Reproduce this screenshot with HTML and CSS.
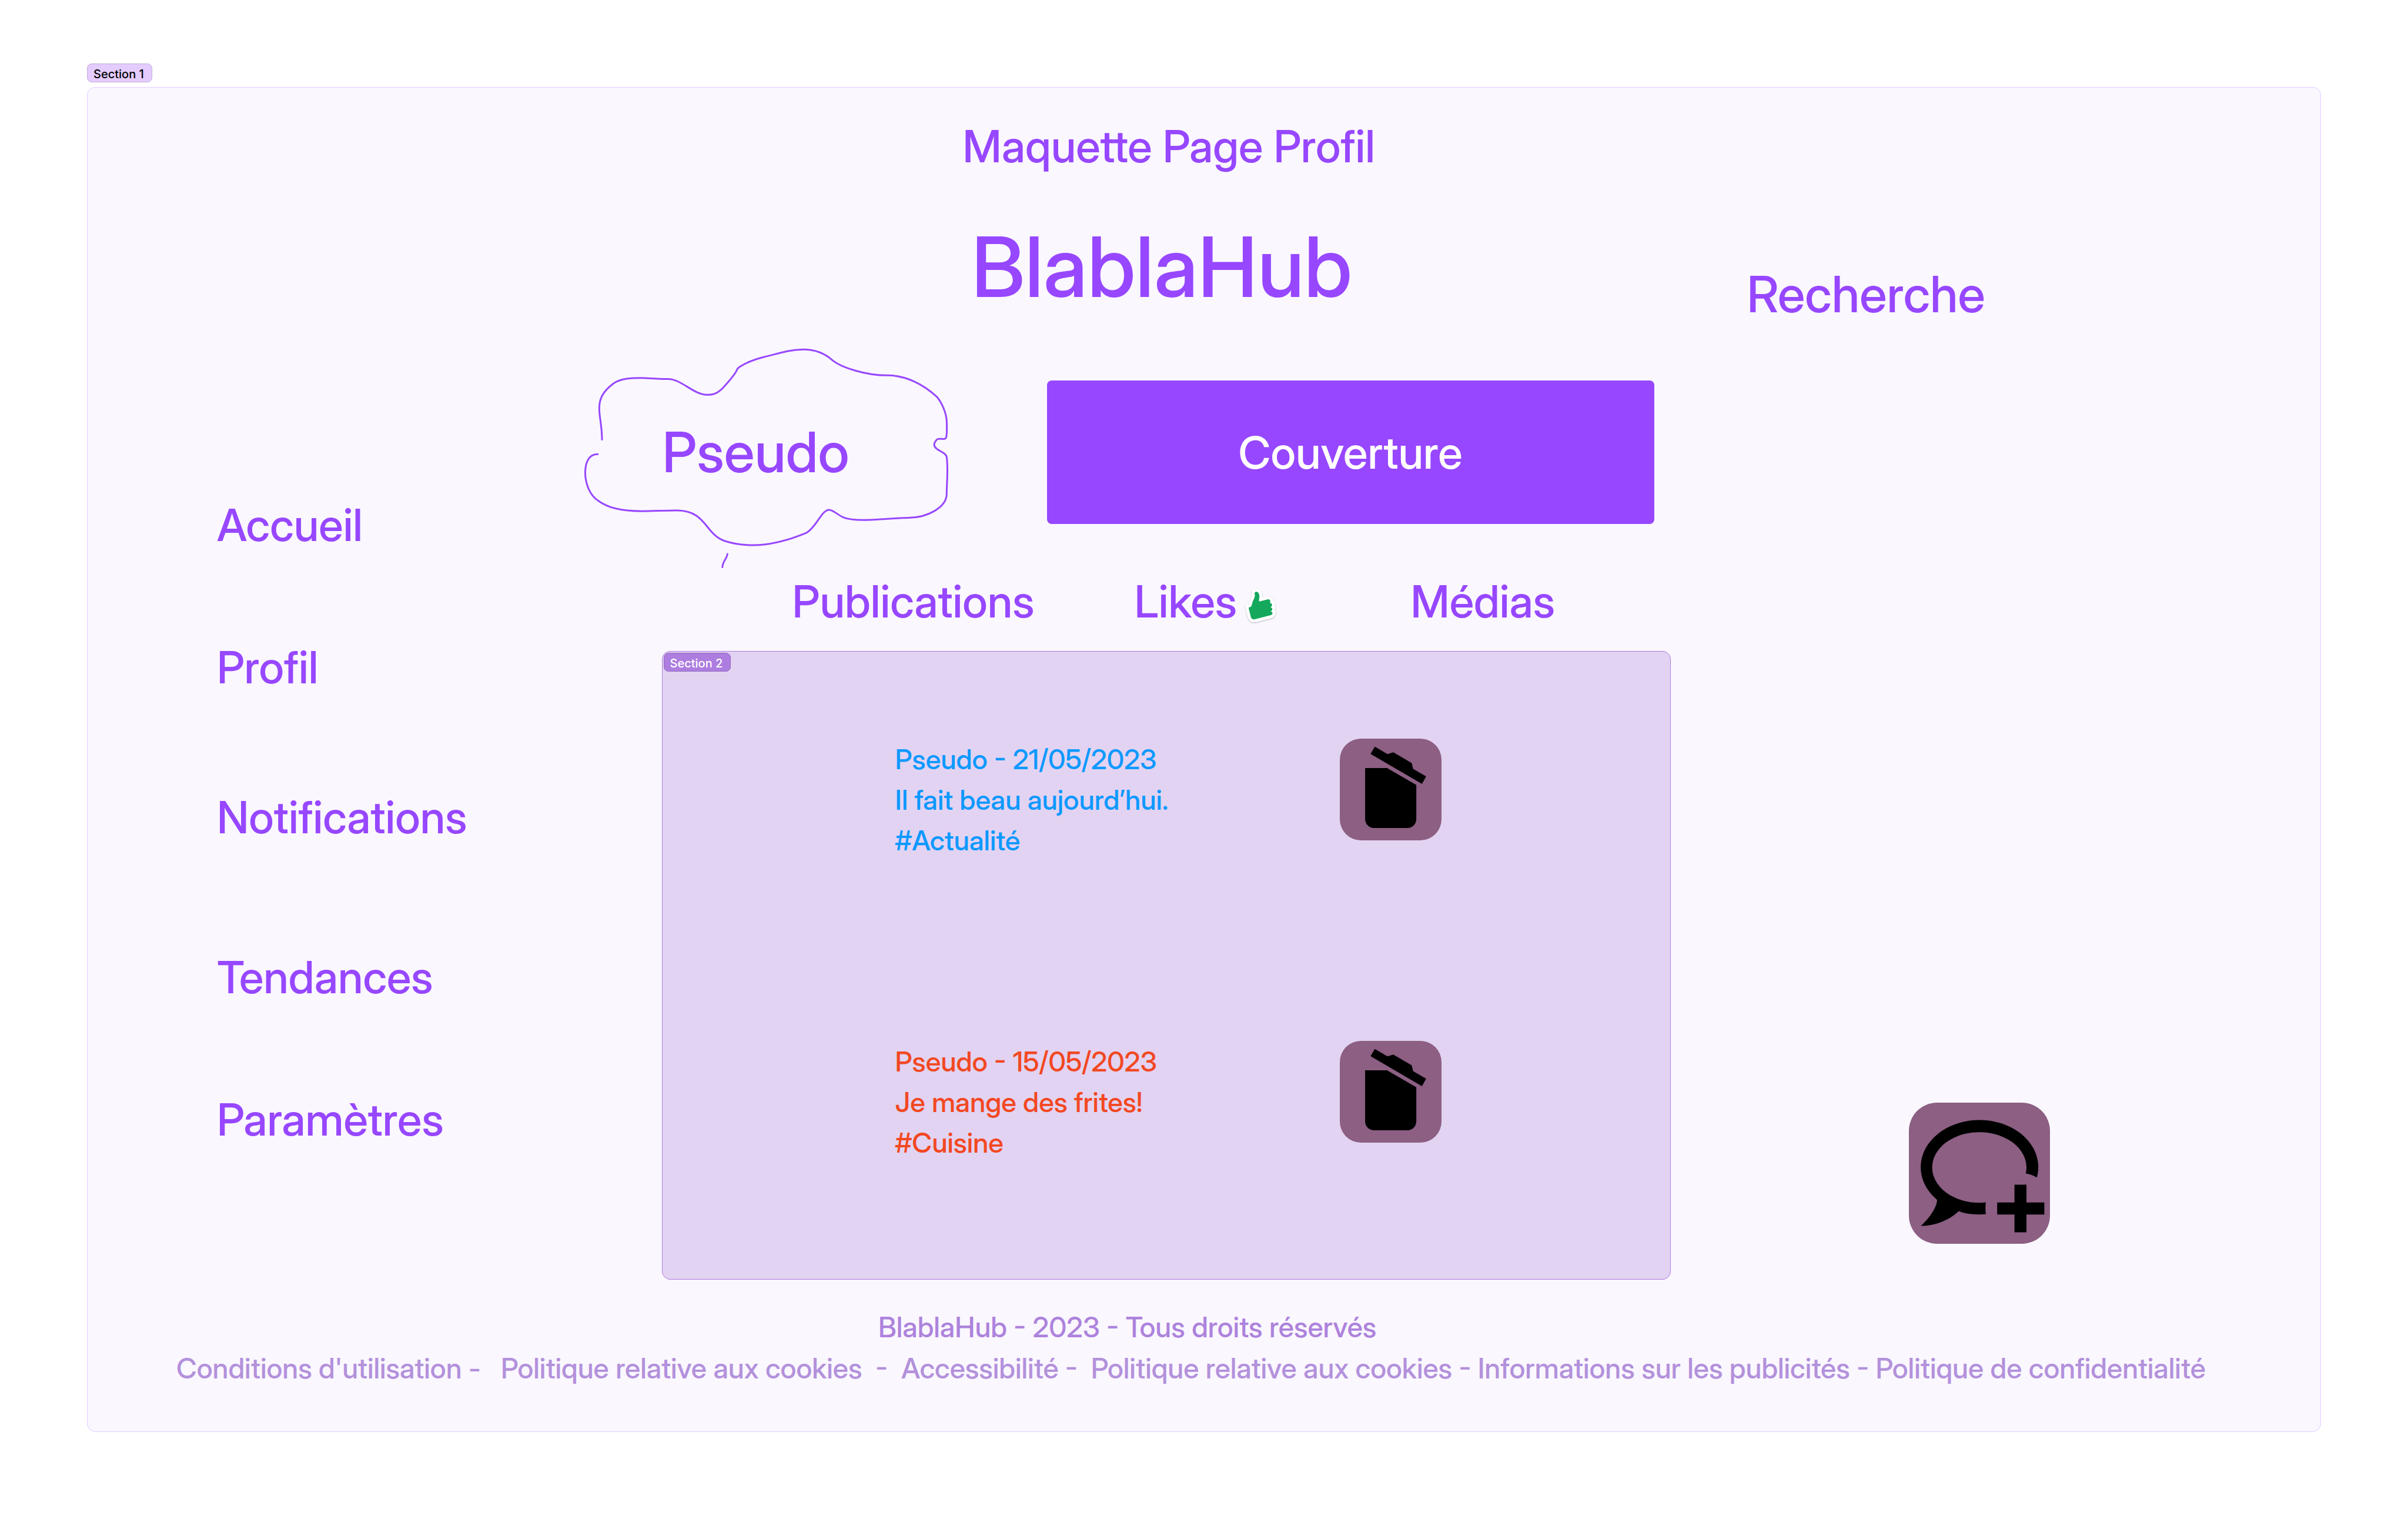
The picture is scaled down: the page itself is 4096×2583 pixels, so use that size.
FILE: index.html
```html
<!DOCTYPE html>
<html lang="fr">
<head>
  <meta charset="utf-8">
  <title>BlablaHub - Profil</title>
  <link rel="stylesheet" href="styles.css">
</head>
<body class="page">
  <svg class="symbols" aria-hidden="true">
    <symbol id="trash" viewBox="96 84 900 900">
      <path d="M406 155 518 221 570 205 732 300 745 352 860 418 823 484 368 219Z"/>
      <path d="M320 344H514L773 494V797C773 840 738 875 695 875H398C355 875 320 840 320 797Z"/>
    </symbol>
  </svg>

  <span class="tag tag-light">Section 1</span>

  <div class="board">
    <div class="columns">
      <nav class="menu" aria-label="Navigation">
        <a href="#accueil">Accueil</a>
        <a href="#profil">Profil</a>
        <a href="#notifications">Notifications</a>
        <a href="#tendances">Tendances</a>
        <a href="#parametres">Paramètres</a>
      </nav>

      <main class="profile">
        <p class="subtitle">Maquette Page Profil</p>
        <h1 class="brand">BlablaHub</h1>

        <div class="identity">
          <div class="bubble">
            <svg class="cloud" viewBox="0 0 1568 1498" preserveAspectRatio="none" aria-hidden="true">
              <path d="M129 666C128 560 118 520 118 460C118 400 130 350 175 295C205 262 245 258 290 259C320 261 370 266 392 266C450 268 490 370 552 370C580 370 596 350 613 321C632 286 655 245 665 212C668 195 672 192 680 183C700 162 740 135 773 121C820 105 870 71 932 71C990 71 1025 108 1049 144C1085 190 1180 243 1268 242C1340 242 1410 300 1465 385C1485 425 1501 490 1503 540C1504 580 1504 620 1502 645C1500 665 1492 662 1484 661C1470 660 1467 658 1460 673C1450 692 1451 710 1462 724C1475 743 1501 755 1503 780C1510 860 1503 960 1503 1025C1503 1110 1430 1180 1350 1182C1300 1182 1230 1196 1172 1196C1150 1196 1110 1192 1090 1178C1068 1162 1050 1129 1034 1129C1005 1129 985 1240 945 1280C880 1325 810 1362 730 1362C690 1362 650 1352 617 1334C540 1290 545 1135 430 1133C390 1132 330 1138 290 1138C210 1138 150 1120 103 1055C75 1015 62 940 62 885C62 820 75 762 112 762"/>
              <path d="M629 1420C627 1455 610 1465 609 1508"/>
            </svg>
            <h2 class="name">Pseudo</h2>
          </div>
          <div class="cover">Couverture</div>
        </div>

        <nav class="tabs" aria-label="Contenu du profil">
          <a href="#publications">Publications</a>
          <a class="likes" href="#likes">Likes
            <svg class="thumb" viewBox="200 100 312 343" aria-hidden="true">
              <path class="sticker" d="M218 264 252 254C258 225 270 205 279 182C270 145 285 117 320 117C355 117 375 150 374 195L415 184C448 178 468 200 470 228C486 240 488 258 484 274C491 285 491 300 487 310C497 335 483 368 458 376L312 413C275 418 252 395 244 365Z"/>
              <path class="hand" d="M251 283 272 275C283 262 280 245 290 225C300 203 307 190 307 172C302 158 302 144 319 143C336 143 346 160 347 185C347 205 338 224 347 228L420 210C436 206 446 222 443 232C441 240 438 243 443 243C462 244 464 270 448 277C443 280 442 281 448 281C464 285 465 308 450 314C444 317 446 317 450 318C467 322 467 345 448 350L308 386C288 390 274 380 270 362Z"/>
            </svg>
          </a>
          <a href="#medias">Médias</a>
        </nav>

        <section class="feed">
          <span class="tag tag-dark">Section 2</span>
          <article class="post post-blue">
            <p>Pseudo - 21/05/2023<br>Il fait beau aujourd’hui.<br>#Actualité</p>
            <button class="tile delete" type="button" aria-label="Supprimer"><svg aria-hidden="true"><use href="#trash"/></svg></button>
          </article>
          <article class="post post-red">
            <p>Pseudo - 15/05/2023<br>Je mange des frites!<br>#Cuisine</p>
            <button class="tile delete" type="button" aria-label="Supprimer"><svg aria-hidden="true"><use href="#trash"/></svg></button>
          </article>
        </section>
      </main>

      <aside class="side">
        <a class="search" href="#recherche">Recherche</a>
        <button class="tile compose" type="button" aria-label="Nouveau message">
          <svg viewBox="96 96 1248 1248" aria-hidden="true">
            <path d="M1228 758A520 417 0 1 0 345 955C346 1010 290 1105 202 1187C320 1186 450 1140 537 1056C597 1082 690 1090 777 1082C772 1048 772 1010 777 978A417 312 0 1 1 1130 722C1165 728 1200 738 1228 758Z"/>
            <path d="M1030 821H1136V979H1294V1085H1136V1243H1030V1085H877V979H1030Z"/>
          </svg>
        </button>
      </aside>
    </div>

    <footer class="footer">
      <p class="rights">BlablaHub - 2023 - Tous droits réservés</p>
      <p class="legal"><a href="#conditions">Conditions d'utilisation</a> -   <a href="#cookies">Politique relative aux cookies</a>  -  <a href="#accessibilite">Accessibilité</a> -  <a href="#cookies">Politique relative aux cookies</a> - <a href="#publicites">Informations sur les publicités</a> - <a href="#confidentialite">Politique de confidentialité</a></p>
    </footer>
  </div>
</body>
</html>
```
FILE: styles.css
```css
* {
  box-sizing: border-box;
  margin: 0;
  padding: 0;
}

.page {
  padding: 108px 148px 148px;
  background: #fff;
  color: #9747ff;
  font-family: "Inter Display", Inter, "Liberation Sans", sans-serif;
  font-size: 76px;
  font-weight: 500;
  line-height: 90px;
}

a {
  color: inherit;
  text-decoration: none;
}

.symbols {
  position: absolute;
  width: 0;
  height: 0;
}

/* Section labels */
.tag {
  display: block;
  width: max-content;
  height: 32px;
  padding: 4px 13px 0 10px;
  border: 1px solid;
  border-radius: 8px;
  font-family: Inter, "Liberation Sans", sans-serif;
  font-size: 20px;
  line-height: 26px;
}

.tag-light {
  margin-bottom: 8px;
  border-color: #c2add9;
  background: #e4ccff;
  color: #000;
}

.tag-dark {
  position: absolute;
  top: 2px;
  left: 2px;
  border-color: #9269be;
  background: #ad7de0;
  color: #fff;
}

.board {
  padding-bottom: 72px;
  border: 1px solid #e4ccff;
  border-radius: 14px;
  background: #faf7ff;
}

.columns {
  display: grid;
  grid-template-columns: 820fr 1874fr 1106fr;
}

.menu {
  display: grid;
  grid-template-rows: 242px 255px 272px 242px auto;
  align-content: start;
  padding: 698px 0 0 220px;
}

/* Profile column */
.profile {
  padding-top: 54px;
}

.subtitle {
  padding-left: 669px;
  font-variant-ligatures: none;
}

.brand {
  margin-top: 76px;
  padding-left: 684px;
  font-size: 142px;
  font-weight: 500;
  line-height: 168px;
}

.identity {
  display: flex;
  align-items: center;
  gap: 143px;
  margin-top: 39px;
  padding-right: 28px;
}

.bubble {
  display: grid;
  align-items: center;
  width: 669px;
}

.cloud,
.name {
  grid-area: 1 / 1;
}

.cloud {
  width: 100%;
  height: 386px;
  overflow: visible;
  fill: none;
  stroke: #9747ff;
  stroke-width: 3px;
  stroke-linecap: round;
}

.cloud path {
  vector-effect: non-scaling-stroke;
}

.name {
  padding-left: 158px;
  font-size: 95px;
  font-weight: 500;
  line-height: 112px;
}

.cover {
  display: grid;
  flex: 1;
  place-items: center;
  height: 244px;
  border-radius: 8px;
  background: #9747ff;
  color: #fff;
}

.tabs {
  display: grid;
  grid-template-columns: 582px 470px auto;
  margin-top: 15px;
  padding-left: 379px;
}

.likes {
  display: flex;
  align-items: center;
  gap: 10px;
}

.thumb {
  width: 60px;
  height: 66px;
  margin-top: 18px;
  overflow: visible;
  filter: drop-shadow(0 1px 1px #0004);
}

.sticker {
  fill: #fff;
}

.hand {
  fill: #14a85c;
}

/* Publications */
.feed {
  position: relative;
  display: grid;
  gap: 304px;
  margin: 40px 0 0 157px;
  padding: 148px 0 195px 396px;
  border: 1px solid #ad7de0;
  border-radius: 14px;
  background: #e2d3f2;
}

.post {
  display: grid;
  grid-template-columns: 756px auto;
  align-items: start;
  justify-content: start;
  font-size: 47px;
  line-height: 69px;
}

.post p {
  padding-bottom: 3px;
}

.post-blue {
  color: #0d99ff;
}

.post-red {
  color: #f24822;
}

.tile {
  display: block;
  border: 0;
  background: #8c5f83;
  color: #000;
  cursor: pointer;
}

.tile svg {
  display: block;
  width: 100%;
  height: 100%;
}

.delete {
  width: 173px;
  height: 173px;
  border-radius: 36px;
}

/* Right column */
.side {
  display: flex;
  flex-direction: column;
  justify-content: space-between;
  padding: 302px 0 61px 130px;
}

.search {
  font-size: 85px;
  line-height: 100px;
}

.compose {
  width: 240px;
  height: 240px;
  margin-left: 275px;
  border-radius: 48px;
}

.footer {
  margin-top: 46px;
  font-size: 48px;
  line-height: 70px;
}

.rights {
  padding-left: 1345px;
  color: #ad83dc;
}

.legal {
  padding-left: 151px;
  color: #b391db;
  white-space: pre;
}
```
